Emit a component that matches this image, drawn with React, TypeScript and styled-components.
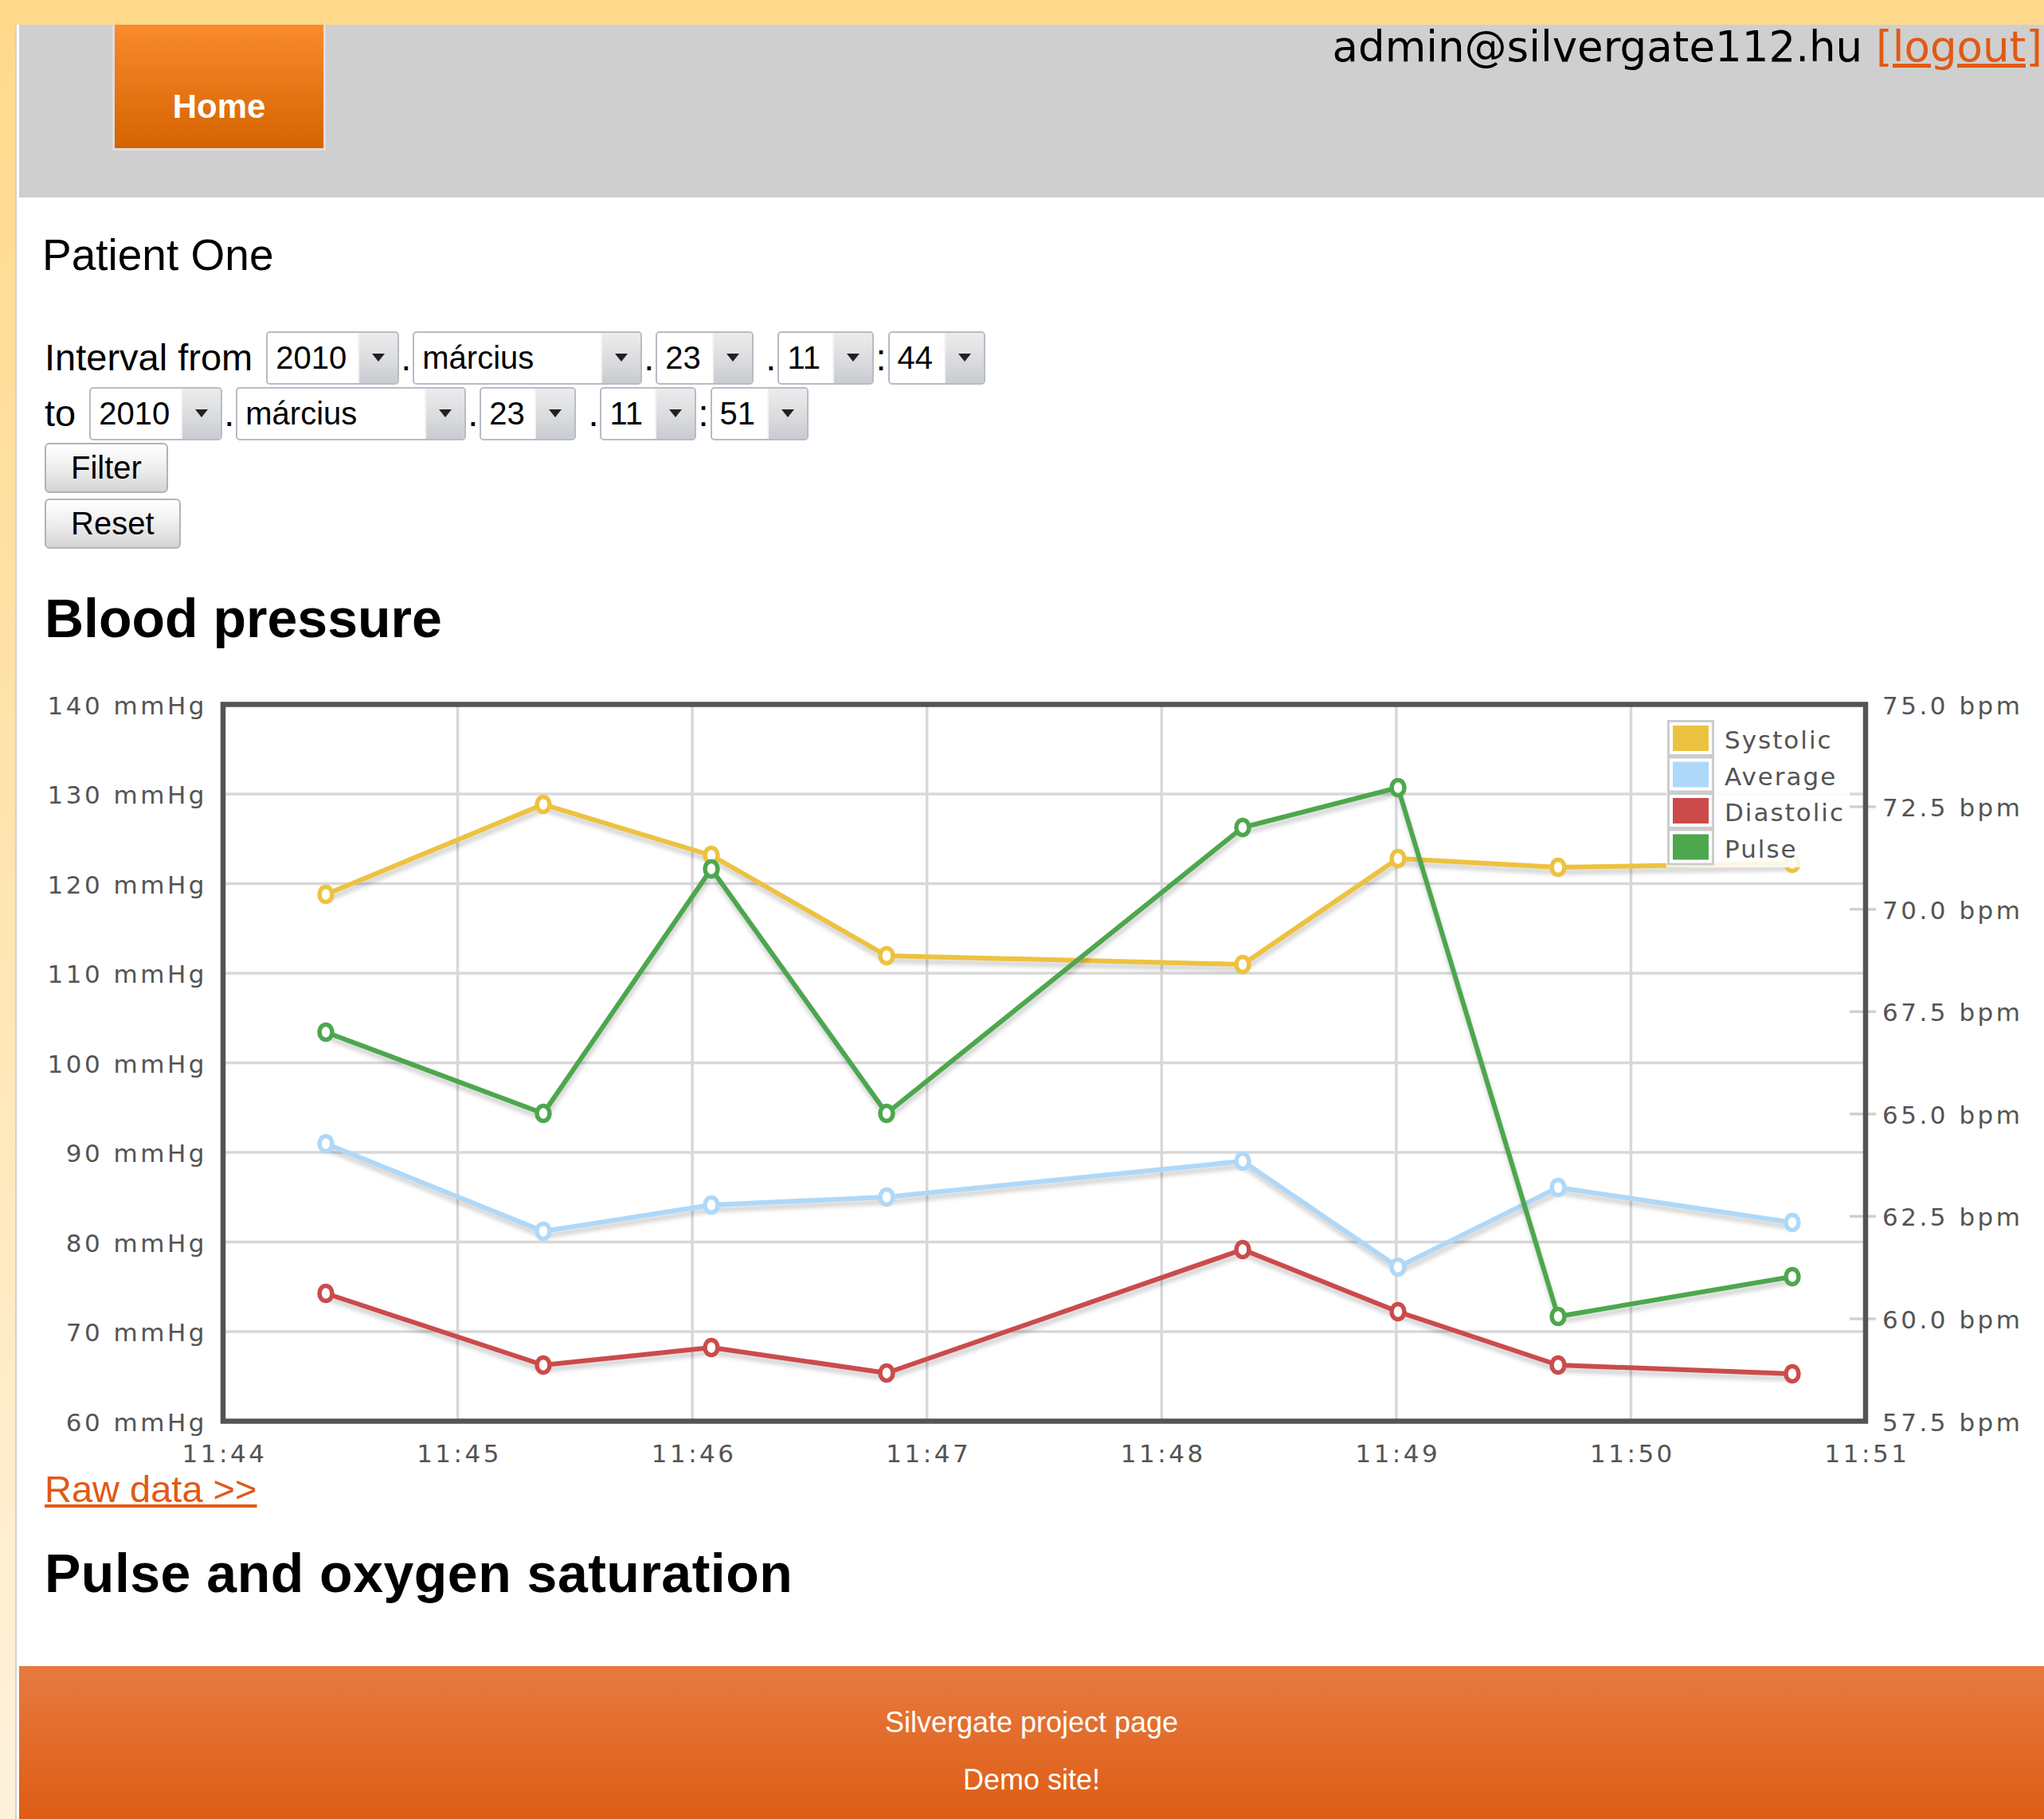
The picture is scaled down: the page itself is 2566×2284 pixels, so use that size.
import React from 'react';
import styled, { createGlobalStyle } from 'styled-components';

const GlobalStyle = createGlobalStyle`
  html, body {
    margin: 0;
    padding: 0;
    overflow: hidden;
  }
  body {
    background: linear-gradient(to bottom, #ffd98b 0%, #fff2dc 100%);
    font-family: "Liberation Sans", Arial, sans-serif;
    color: #000;
  }
`;

const Page = styled.div`
  margin: 31px 0 0 19px;
  border-left: 2px solid #d3d3d3;
  padding-left: 3px;
  background: #fff;
`;

const Header = styled.header`
  display: flex;
  align-items: flex-start;
  height: 217px;
  background: #cfcfcf;
`;

const NavTab = styled.a`
  box-sizing: border-box;
  margin-left: 117px;
  width: 268px;
  height: 158px;
  padding-top: 82px;
  border: 3px solid #dedede;
  border-top: 0;
  background: linear-gradient(to bottom, #f98b2d, #d56300);
  color: #fff;
  font-size: 42px;
  line-height: 42px;
  font-weight: bold;
  text-align: center;
  text-decoration: none;
`;

const UserBar = styled.div`
  margin-left: auto;
  padding: 2px 2px 0 0;
  font-family: "DejaVu Sans", Verdana, sans-serif;
  font-size: 53px;
  line-height: 52px;
  white-space: nowrap;
`;

const OrangeLink = styled.a`
  color: #e05a14;
  text-decoration: underline;
`;

const Main = styled.main`
  padding-left: 32px;
`;

const PatientName = styled.h1`
  margin: 45px 0 0 -3px;
  font-size: 55px;
  line-height: 55px;
  font-weight: normal;
`;

const FilterForm = styled.form`
  margin-top: 66px;
  font-size: 47px;
`;

const FieldRow = styled.div`
  display: flex;
  align-items: center;
  height: 70px;
`;

const FieldLabel = styled.span`
  line-height: 46px;
  margin-right: 17px;
`;

const Sep = styled.span`
  padding: 0 2px;
  line-height: 46px;
`;

const SelectBox = styled.div<{ $w: number }>`
  box-sizing: border-box;
  display: flex;
  width: ${(p) => p.$w}px;
  height: 67px;
  border: 2px solid #b7bcc5;
  border-radius: 5px;
  background: #fff;
  overflow: hidden;
`;

const SelectValue = styled.span`
  flex: 1;
  padding-left: 10px;
  font-size: 40px;
  line-height: 63px;
`;

const SelectArrow = styled.span`
  display: flex;
  align-items: center;
  justify-content: center;
  width: 48px;
  border-left: 2px solid #f4f4f4;
  background: linear-gradient(to bottom, #ececec, #d9dadd 60%, #c8cbd0);

  &::after {
    content: '';
    width: 0;
    height: 0;
    border-left: 8px solid transparent;
    border-right: 8px solid transparent;
    border-top: 10px solid #222;
  }
`;

const ButtonStack = styled.div`
  display: flex;
  flex-direction: column;
  align-items: flex-start;
  gap: 7px;
  padding-top: 2px;
`;

const ActionButton = styled.button`
  height: 63px;
  padding: 0 31px;
  border: 2px solid #b3b3b3;
  border-radius: 6px;
  background: linear-gradient(to bottom, #ffffff, #eeeeee 50%, #d4d4d4);
  font-family: "Liberation Sans", Arial, sans-serif;
  font-size: 40px;
  color: #000;
`;

const SectionTitle = styled.h2`
  margin: 0;
  font-size: 68px;
  line-height: 68px;
  font-weight: bold;
`;

const BloodTitle = styled(SectionTitle)`
  margin-top: 53px;
`;

const PulseTitle = styled(SectionTitle)`
  margin-top: 48px;
  letter-spacing: 0.5px;
`;

const ChartBox = styled.div`
  margin-top: 53px;

  svg {
    display: block;
  }
`;

const RawLink = styled(OrangeLink)`
  display: inline-block;
  font-size: 47px;
  line-height: 47px;
`;

const Footer = styled.footer`
  margin-top: 83px;
  padding: 35px 0 30px;
  background: linear-gradient(to bottom, #e77a40, #dc5a10);
  color: #fff;
  text-align: center;
  font-size: 36px;
  line-height: 72px;
`;

type Field = { value: string; width: number };

const fromFields: Field[] = [
  { value: '2010', width: 167 },
  { value: 'március', width: 288 },
  { value: '23', width: 123 },
  { value: '11', width: 121 },
  { value: '44', width: 122 },
];

const toFields: Field[] = [
  { value: '2010', width: 167 },
  { value: 'március', width: 289 },
  { value: '23', width: 121 },
  { value: '11', width: 121 },
  { value: '51', width: 123 },
];

const separators = ['.', '.', '\u00a0.', ':'];

function DateRow({ label, fields }: { label: string; fields: Field[] }) {
  return (
    <FieldRow>
      <FieldLabel>{label}</FieldLabel>
      {fields.map((f, i) => (
        <React.Fragment key={i}>
          <SelectBox $w={f.width}>
            <SelectValue>{f.value}</SelectValue>
            <SelectArrow />
          </SelectBox>
          {i < separators.length && <Sep>{separators[i]}</Sep>}
        </React.Fragment>
      ))}
    </FieldRow>
  );
}

// plot frame in page coordinates
const PLOT = { left: 280, right: 2342, top: 883.5, bottom: 1783.5 };
const xs = [409, 682, 893, 1113, 1560, 1755, 1956, 2250];

const series = [
  { name: 'Systolic', color: '#edc240', ys: [1122, 1009, 1073, 1199, 1210, 1077, 1088, 1083] },
  { name: 'Average', color: '#afd8f8', ys: [1435, 1545, 1512, 1502, 1457, 1590, 1490, 1534] },
  { name: 'Diastolic', color: '#cb4b4b', ys: [1623, 1713, 1691, 1723, 1568, 1646, 1713, 1724] },
  { name: 'Pulse', color: '#4da74d', ys: [1295, 1397, 1090, 1397, 1038, 988, 1652, 1602] },
];

const mmHg = [140, 130, 120, 110, 100, 90, 80, 70, 60];
const bpm = ['75.0', '72.5', '70.0', '67.5', '65.0', '62.5', '60.0', '57.5'];
const times = ['11:44', '11:45', '11:46', '11:47', '11:48', '11:49', '11:50', '11:51'];

const labelProps = {
  fontFamily: '"DejaVu Sans", Verdana, sans-serif',
  fontSize: 31,
  letterSpacing: 3.5,
  fill: '#545454',
};

function BloodPressureChart() {
  const plotH = PLOT.bottom - PLOT.top;
  const stepX = (PLOT.right - PLOT.left) / 7;
  const leftY = (i: number) => PLOT.top + (plotH / 8) * i;
  const rightY = (i: number) => PLOT.top + (plotH / 7) * i;

  return (
    <svg width={2510} height={983} viewBox="56 862 2510 983">
      <defs>
        <filter id="soft" x="-5%" y="-5%" width="110%" height="110%">
          <feGaussianBlur stdDeviation="2.5" />
        </filter>
        <clipPath id="plotArea">
          <rect x={PLOT.left} y={PLOT.top} width={PLOT.right - PLOT.left} height={plotH} />
        </clipPath>
      </defs>

      {/* grid */}
      {mmHg.slice(1, -1).map((_, i) => (
        <line key={'h' + i} x1={PLOT.left} x2={PLOT.right} y1={leftY(i + 1)} y2={leftY(i + 1)} stroke="#d8d8d8" strokeWidth={3.5} />
      ))}
      {times.slice(1, -1).map((_, i) => (
        <line key={'v' + i} x1={PLOT.left + stepX * (i + 1)} x2={PLOT.left + stepX * (i + 1)} y1={PLOT.top} y2={PLOT.bottom} stroke="#d8d8d8" strokeWidth={3.5} />
      ))}
      {bpm.slice(1, -1).map((_, i) => (
        <line key={'t' + i} x1={2322} x2={2355} y1={rightY(i + 1)} y2={rightY(i + 1)} stroke="#d0d0d0" strokeWidth={3.5} />
      ))}

      {/* series */}
      <g clipPath="url(#plotArea)">
        {series.map((s) => {
          const pts = xs.map((x, i) => `${x},${s.ys[i]}`).join(' ');
          return (
            <g key={s.name}>
              <polyline points={pts} transform="translate(1,6)" fill="none" stroke="rgba(0,0,0,0.16)" strokeWidth={7} filter="url(#soft)" />
              <polyline points={pts} fill="none" stroke={s.color} strokeWidth={6} strokeLinejoin="round" />
              {xs.map((x, i) => (
                <ellipse key={i} cx={x} cy={s.ys[i]} rx={8} ry={9.5} fill="#fff" stroke={s.color} strokeWidth={5.5} />
              ))}
            </g>
          );
        })}
      </g>

      <rect x={PLOT.left} y={PLOT.top} width={PLOT.right - PLOT.left} height={plotH} fill="none" stroke="#545454" strokeWidth={6.5} />

      {/* axis labels */}
      {mmHg.map((v, i) => (
        <text key={'l' + v} x={260} y={leftY(i) + 12} textAnchor="end" {...labelProps}>
          {v} mmHg
        </text>
      ))}
      {bpm.map((v, i) => (
        <text key={'r' + v} x={2363} y={rightY(i) + 12} {...labelProps}>
          {v} bpm
        </text>
      ))}
      {times.map((t, i) => (
        <text key={'x' + t} x={PLOT.left + stepX * i + 2} y={1835} textAnchor="middle" {...labelProps}>
          {t}
        </text>
      ))}

      {/* legend */}
      <rect x={2092} y={903} width={230} height={185} fill="#fff" opacity={0.85} />
      {series.map((s, i) => {
        const top = 903 + i * 45.5;
        return (
          <g key={'lg' + s.name}>
            <rect x={2094.5} y={top + 1.5} width={56} height={43} fill="#fff" stroke="#cccccc" strokeWidth={3} />
            <rect x={2100} y={top + 7} width={45} height={32} fill={s.color} />
            <text x={2165} y={top + 36} {...labelProps} letterSpacing={2}>
              {s.name}
            </text>
          </g>
        );
      })}
    </svg>
  );
}

export default function App() {
  return (
    <>
      <GlobalStyle />
      <Page>
        <Header>
          <NavTab href="#">Home</NavTab>
          <UserBar>
            admin@silvergate112.hu <OrangeLink href="#">[logout]</OrangeLink>
          </UserBar>
        </Header>

        <Main>
          <PatientName>Patient One</PatientName>

          <FilterForm onSubmit={(e) => e.preventDefault()}>
            <DateRow label="Interval from" fields={fromFields} />
            <DateRow label="to" fields={toFields} />
            <ButtonStack>
              <ActionButton type="submit">Filter</ActionButton>
              <ActionButton type="button">Reset</ActionButton>
            </ButtonStack>
          </FilterForm>

          <BloodTitle>Blood pressure</BloodTitle>
          <ChartBox>
            <BloodPressureChart />
          </ChartBox>
          <RawLink href="#">Raw data &gt;&gt;</RawLink>

          <PulseTitle>Pulse and oxygen saturation</PulseTitle>
        </Main>

        <Footer>
          <div>Silvergate project page</div>
          <div>Demo site!</div>
        </Footer>
      </Page>
    </>
  );
}
